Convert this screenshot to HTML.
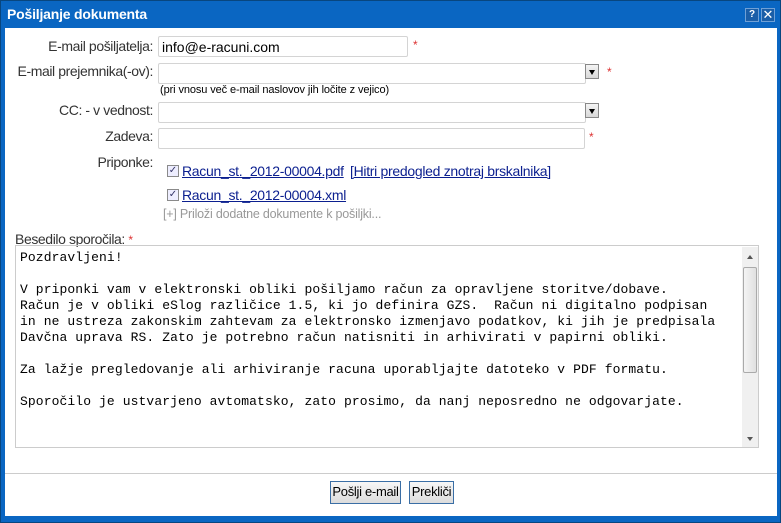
<!DOCTYPE html>
<html><head><meta charset="utf-8"><style>
*{margin:0;padding:0;box-sizing:border-box}
body{width:781px;height:523px;background:#0a5fb0;position:relative;overflow:hidden;font-family:"Liberation Sans",sans-serif;font-size:13px;color:#333}
.win{position:absolute;left:0;top:0;width:781px;height:523px;background:#0a66c2;border:1px solid #08467f}
.title{position:absolute;left:6px;top:5px;color:#fff;font-weight:bold;font-size:14px;letter-spacing:-0.2px}
.tb{position:absolute;top:7px;width:14px;height:14px;background:#1a5ea8;border:1px solid #6fa0d6;color:#fff;font-size:10px;font-weight:bold;text-align:center;line-height:12px}
.body{position:absolute;left:4px;top:27px;width:772px;height:488px;background:#fff}
.lbl{position:absolute;text-align:right;white-space:nowrap;letter-spacing:-0.4px;font-size:14px}
.in{position:absolute;height:21px;border:1px solid #d4d4d4;border-radius:2px;background:#fff;font-size:14px;padding:2px 3px;color:#000}
.dd{position:absolute;width:14px;height:15px;border:1px solid #888;background:linear-gradient(#f4f4f4,#d8d8d8)}
.dd:after{content:"";position:absolute;left:3px;top:5px;border-left:3.5px solid transparent;border-right:3.5px solid transparent;border-top:5px solid #000}
.req{position:absolute;color:#d33;font-size:12px}
.cb{position:absolute;width:12px;height:12px;border:1px solid #8a8a8a;background:#eef;font-size:10px;line-height:10px;color:#336;text-align:center}
a{color:#0b1f8f;text-decoration:underline;position:absolute;white-space:nowrap;letter-spacing:-0.3px;font-size:14px}
.ta{position:absolute;left:10px;top:217px;width:744px;height:203px;border:1px solid #ccc;font-family:"Liberation Mono",monospace;font-size:13px;line-height:16px;padding:4px 4px;white-space:pre;color:#000;letter-spacing:0.1px}
.sb{position:absolute;left:726px;top:1px;width:16px;height:200px;background:#f0f0f0}
.btn{position:absolute;top:453px;height:23px;border:1px solid #3a6ea5;background:linear-gradient(#f7f7f7,#dcdcdc);font-size:13px;color:#000;text-align:center;line-height:20px;letter-spacing:-0.3px}
.ar{position:absolute;left:5px;border-left:3px solid transparent;border-right:3px solid transparent}
</style></head><body>
<div class="win">
<div class="title">Pošiljanje dokumenta</div>
<div class="tb" style="left:744px">?</div>
<div class="tb" style="left:760px;font-weight:normal;font-size:13px">✕</div>
<div class="body">
<div class="lbl" style="top:10px;right:624px">E-mail pošiljatelja:</div>
<div class="in" style="left:153px;top:8px;width:250px">info@e-racuni.com</div>
<div class="req" style="left:408px;top:10px">*</div>
<div class="lbl" style="top:35px;right:624px">E-mail prejemnika(-ov):</div>
<div class="in" style="left:153px;top:35px;width:428px"></div>
<div class="dd" style="left:580px;top:36px"></div>
<div class="req" style="left:602px;top:37px">*</div>
<div style="position:absolute;left:155px;top:56px;font-size:11px;color:#000;letter-spacing:-0.1px">(pri vnosu več e-mail naslovov jih ločite z vejico)</div>
<div class="lbl" style="top:74px;right:624px">CC: - v vednost:</div>
<div class="in" style="left:153px;top:74px;width:428px"></div>
<div class="dd" style="left:580px;top:75px"></div>
<div class="lbl" style="top:100px;right:624px">Zadeva:</div>
<div class="in" style="left:153px;top:100px;width:427px"></div>
<div class="req" style="left:584px;top:102px">*</div>
<div class="lbl" style="top:126px;right:624px">Priponke:</div>
<div class="cb" style="left:162px;top:137px">✓</div>
<a style="left:177px;top:135px">Racun_st._2012-00004.pdf</a>
<a style="left:345px;top:135px">[Hitri predogled znotraj brskalnika]</a>
<div class="cb" style="left:162px;top:161px">✓</div>
<a style="left:177px;top:159px">Racun_st._2012-00004.xml</a>
<div style="position:absolute;left:158px;top:179px;color:#999;font-size:12.5px;letter-spacing:-0.2px">[+] Priloži dodatne dokumente k pošiljki...</div>
<div style="position:absolute;left:10px;top:203px;letter-spacing:-0.4px;font-size:14px">Besedilo sporočila: <span style="color:#d33;font-size:12px">*</span></div>
<div class="ta">Pozdravljeni!

V priponki vam v elektronski obliki pošiljamo račun za opravljene storitve/dobave.
Račun je v obliki eSlog različice 1.5, ki jo definira GZS.  Račun ni digitalno podpisan
in ne ustreza zakonskim zahtevam za elektronsko izmenjavo podatkov, ki jih je predpisala
Davčna uprava RS. Zato je potrebno račun natisniti in arhivirati v papirni obliki.

Za lažje pregledovanje ali arhiviranje racuna uporabljajte datoteko v PDF formatu.

Sporočilo je ustvarjeno avtomatsko, zato prosimo, da nanj neposredno ne odgovarjate.
<div class="sb"><div class="ar" style="top:8px;border-bottom:4px solid #555"></div><div style="position:absolute;left:1px;top:20px;width:14px;height:106px;border:1px solid #aaa;border-radius:2px;background:linear-gradient(90deg,#f4f4f4,#e0e0e0)"></div><div class="ar" style="top:190px;border-top:4px solid #555"></div></div></div>
<div style="position:absolute;left:0;top:445px;width:772px;height:1px;background:#ccc"></div>
<div class="btn" style="left:325px;width:71px">Pošlji e-mail</div>
<div class="btn" style="left:404px;width:45px">Prekliči</div>
</div>
</div>
</body></html>
